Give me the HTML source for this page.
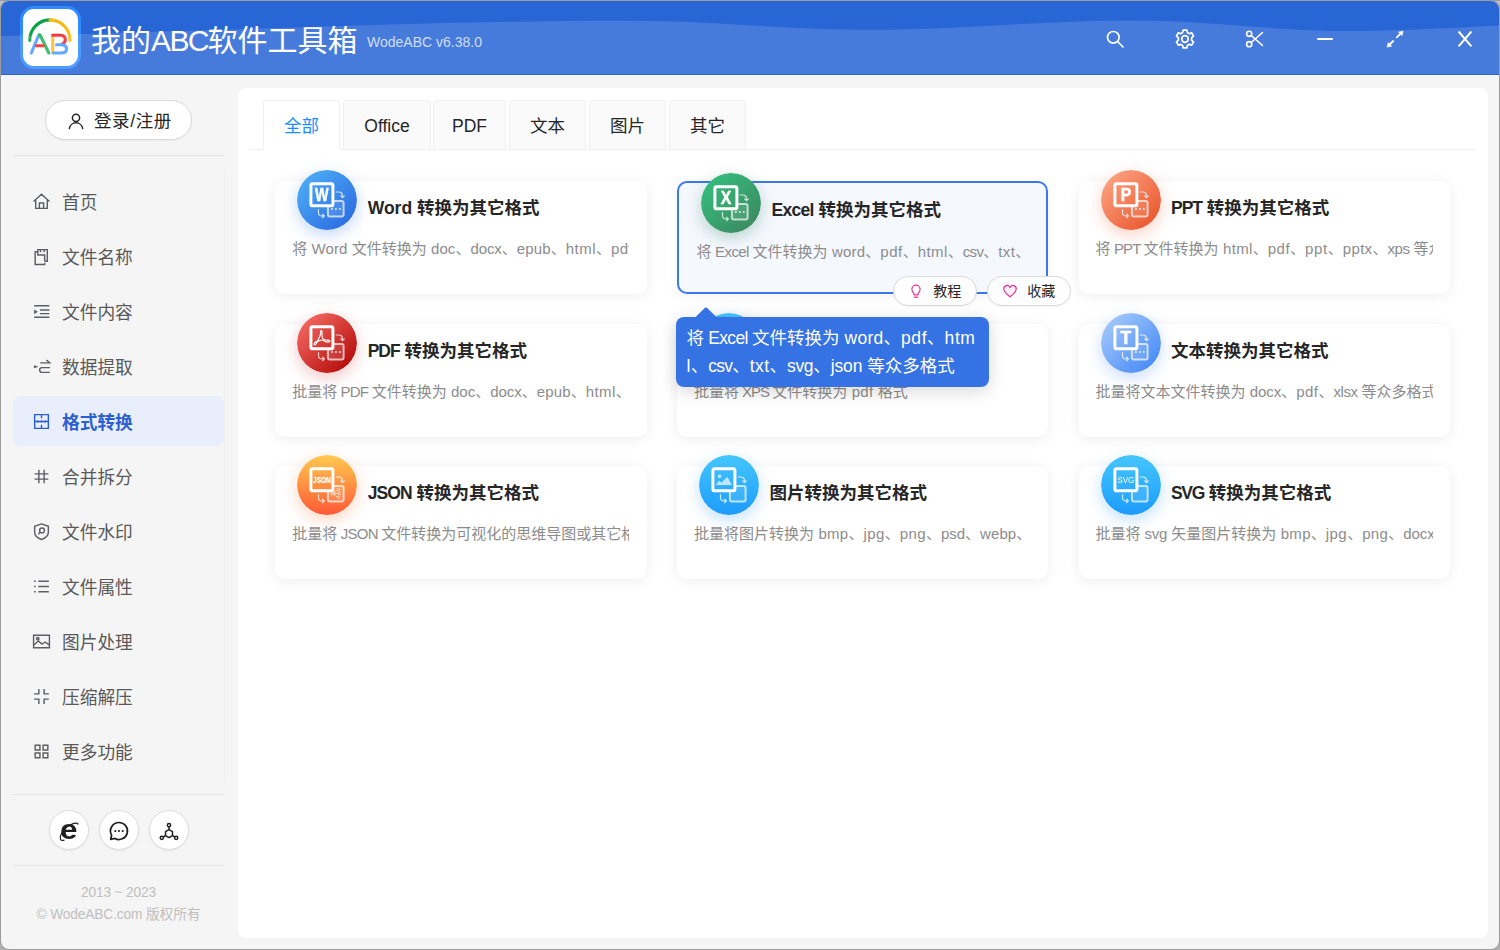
<!DOCTYPE html>
<html lang="zh-CN">
<head>
<meta charset="utf-8">
<title>我的ABC软件工具箱</title>
<style>
*{box-sizing:border-box;margin:0;padding:0}
html,body{width:1500px;height:950px;overflow:hidden}
body{background:linear-gradient(#8f9cc0 0,#8f9cc0 1px,#c2beb4 1px,#b0b0b0 100%);font-family:"Liberation Sans","Noto Sans CJK SC",sans-serif;color:#262626;position:relative}
.abs{position:absolute}
#win{position:absolute;left:1px;top:1px;width:1498px;height:948px;border-radius:8px;background:#f5f5f5;overflow:hidden;box-shadow:0 0 0 1px #9c9c9c}
/* header */
#hdr{position:absolute;left:0;top:0;width:1498px;height:74px;background:#2866d6}
#hdr svg.wave{position:absolute;left:0;top:0}
#logo{position:absolute;left:19px;top:5px;width:61px;height:62.500px;border-radius:14px;background:#fff;border:3px solid #2f8bff}
#title{position:absolute;left:90px;top:18.500px;font-size:30px;line-height:42px;color:#fff;white-space:nowrap;letter-spacing:0}
#title b{font-weight:400;letter-spacing:-1.600px;margin-right:-0.500px}
#ver{position:absolute;left:366px;top:31px;font-size:14px;line-height:20px;color:#c9d8f5;white-space:nowrap}
.hico{position:absolute;top:28px;width:20px;height:20px}
/* sidebar */
#login{position:absolute;left:44px;top:99px;width:147px;height:40px;border-radius:20px;background:#fff;border:1px solid #d9d9d9;box-shadow:0 1px 2px rgba(0,0,0,.04)}
#login span{position:absolute;left:48px;top:7px;letter-spacing:.600px;font-size:17.500px;line-height:26px;color:#262626;white-space:nowrap}
.hr{position:absolute;left:12px;width:211px;height:1px;background:#e4e4e4}
.mi{position:absolute;left:12px;width:211px;height:49px;border-radius:8px}
.mi span{position:absolute;left:49px;top:12.500px;font-size:17.700px;line-height:26px;color:#595959;white-space:nowrap}
.mi svg{position:absolute;left:19px;top:15px;width:19px;height:19px;stroke:#5c5f66;fill:none;stroke-width:1.350}
.mi.on{background:#e8eefc;margin-top:-1px;height:50px}
.mi.on span{margin-top:1px}
.mi.on svg{margin-top:1px}
.mi.on span{color:#2b5fd0;font-weight:700}
.mi.on svg{stroke:#2b5fd0}
.cb{position:absolute;top:809px;width:40px;height:40px;border-radius:20px;background:#fff;border:1px solid #dcdcdc;box-shadow:0 1px 2px rgba(0,0,0,.05)}
.foot{position:absolute;left:12px;width:211px;text-align:center;letter-spacing:-.150px;font-size:13.750px;line-height:20px;color:#bfbfbf;white-space:nowrap}
/* main */
#main{position:absolute;left:237px;top:87px;width:1250px;height:850px;border-radius:8px;background:#fff}
.tab{position:absolute;top:12px;height:50px;background:#fafafa;border:1px solid #f0f0f0;border-radius:4px 4px 0 0;font-size:17.500px;line-height:51.500px;text-align:center;color:#262626}
.tab.on{background:#fff;color:#1890ff;border-bottom-color:#fff}
.card{position:absolute;width:371.600px;height:113px;border-radius:10px;background:#fff;box-shadow:0 2px 14px rgba(0,0,0,.07)}
.card .ic{position:absolute;left:22.300px;top:-11.300px;width:60px;height:60px;border-radius:30px}
.card .t{position:absolute;left:92.500px;top:13px;font-size:17.500px;line-height:28px;font-weight:700;color:#262626;white-space:nowrap}
.card .d{position:absolute;left:17px;top:57px;width:337px;font-size:15px;line-height:22px;color:#8c8c8c;white-space:nowrap;overflow:hidden}

.card.sel{border:2px solid #3b78ee;background:#f5f8ff;box-shadow:0 2px 12px rgba(0,0,0,.05)}
.card.sel .ic{left:22.200px;top:-10.200px}
.card.sel .t{left:92.600px;top:13px}
.card.sel .d{left:17.500px;top:57.500px;width:329px}
.pill{position:absolute;width:83.700px;height:30px;border-radius:16px;background:#fff;border:1px solid #d9d9d9;box-shadow:0 1px 2px rgba(0,0,0,.04)}
.pill svg{position:absolute;top:6.300px;width:16px;height:16px}
.pill span{position:absolute;left:39px;top:3.700px;font-size:14px;line-height:21px;color:#262626;white-space:nowrap}
#tip{position:absolute;left:438px;top:229px;width:313px;height:70px;border-radius:8px;background:#3572e3;box-shadow:0 4px 18px rgba(0,0,0,.16)}
#tip>i{position:absolute;left:22px;top:-7px;width:15px;height:15px;background:#3572e3;transform:rotate(45deg);border-radius:2px}
#tip div{position:absolute;left:10.500px;top:7px;font-size:17.500px;line-height:28px;color:#fff;white-space:nowrap}
.card i,#tip div i{font-style:normal}
</style>
</head>
<body>
<div id="win">
  <div id="hdr">
    <div id="logo"><svg viewBox="23 9 55 56.500" width="55" height="56.500" style="position:absolute;left:0;top:0" fill="none" stroke-width="3.100" stroke-linecap="round" stroke-linejoin="round">
<path d="M29.800 40.400 A20.200 20.200 0 0 1 50 19.900" stroke="#0aa344"/>
<path d="M50 19.900 A20.200 20.200 0 0 1 70 40.400" stroke="#fbb80f"/>
<path d="M31.300 53 L38 36.800 Q39.300 34 40.600 36.800" stroke="#4c9bff"/>
<path d="M39.300 34.900 Q40.300 34.900 41.300 37.500 L48.800 53" stroke="#1fb35a"/>
<path d="M36.400 45.800 H43.200" stroke="#ff1f1f"/>
<path d="M52.700 35.300 V53" stroke="#fbbc1d"/>
<path d="M52.700 35.300 H60.500 Q65.300 35.300 65.300 39.800 Q65.300 43 62 44.300" stroke="#f5222d"/>
<path d="M56.500 44.800 H61.500 Q66.500 45 66.500 49 Q66.500 53 61.500 53 H53.500" stroke="#4c9bff"/>
</svg></div>
    <div id="title">我的<b>ABC</b>软件工具箱</div>
    <div id="ver">WodeABC v6.38.0</div>

    <svg class="hico" style="left:1104px" viewBox="0 0 20 20" fill="none" stroke="#fff" stroke-width="1.700" stroke-linecap="round"><circle cx="8.300" cy="8.300" r="5.800"/><path d="M12.700 12.700 L18 18"/></svg>
    <svg class="hico" style="left:1174px" viewBox="0.500 0.500 19 19" fill="none" stroke="#fff" stroke-width="1.650" stroke-linejoin="round"><circle cx="10" cy="10" r="3.100"/><path d="M8.300 1.500 H11.700 L12.300 3.900 L14 4.900 L16.400 4.200 L18.100 7.100 L16.300 8.900 V11.100 L18.100 12.900 L16.400 15.800 L14 15.100 L12.300 16.100 L11.700 18.500 H8.300 L7.700 16.100 L6 15.100 L3.600 15.800 L1.900 12.900 L3.700 11.100 V8.900 L1.900 7.100 L3.600 4.200 L6 4.900 L7.700 3.900 Z"/></svg>
    <svg class="hico" style="left:1244px" viewBox="0 0 20 20" fill="none" stroke="#fff" stroke-width="1.600" stroke-linecap="round"><circle cx="4.200" cy="4.800" r="2.600"/><circle cx="4.200" cy="15.200" r="2.600"/><path d="M6.200 6.500 L17.500 16.500 M6.200 13.500 L17.500 3.500"/></svg>
    <svg class="hico" style="left:1314px" viewBox="0 0 20 20" fill="none" stroke="#fff" stroke-width="2.200" stroke-linecap="round"><path d="M3 10 H17"/></svg>
    <svg class="hico" style="left:1384px" viewBox="0 0 20 20" fill="#fff" stroke="#fff" stroke-width="1.900" stroke-linecap="butt"><path d="M11.300 8.900 L16 4.200 M8.700 11.500 L4 16.200" fill="none"/><path d="M18.200 2 L13.400 3 L17.200 6.800 Z M2 18.200 L6.800 17.200 L3 13.400 Z" stroke-width=".4" stroke-linejoin="round"/></svg>
    <svg class="hico" style="left:1454px" viewBox="0 0 20 20" fill="none" stroke="#fff" stroke-width="2" stroke-linecap="butt"><path d="M3.600 2.500 L16.400 17.400 M16.400 2.500 L3.600 17.400"/></svg>
    <svg class="wave" width="1498" height="74" viewBox="0 0 1498 74"><path d="M0 35 C200 31 420 20 624 19.700 C720 19.700 780 28.800 871 28.800 C960 28.800 1040 19.500 1130 19.500 C1210 19.500 1270 30 1349 30 C1390 30 1440 27.500 1498 24.500 L1498 73 L0 73 Z" fill="#fff" fill-opacity="0.14"/></svg>
  </div>

  <div id="login"><svg viewBox="0 0 18 18" style="position:absolute;left:21px;top:11px;width:18px;height:18px" fill="none" stroke="#262626" stroke-width="1.500" stroke-linecap="round"><circle cx="9" cy="5.800" r="3.600"/><path d="M2.300 16.500 A6.800 6.800 0 0 1 15.700 16.500"/></svg><span>登录/注册</span></div>
  <div class="hr" style="top:154px"></div>

  <div class="mi" style="top:176px"><svg viewBox="0 0 18 18"><path d="M1.5 9 L9 2 L16.5 9 M3.5 7.5 V15.5 H14.5 V7.5 M7 15.5 V10.5 H11 V15.5"/></svg><span>首页</span></div>
  <div class="mi" style="top:231px"><svg viewBox="0 0 18 18"><path d="M5.5 4.5 H3 V16.5 H12 V15 M5.5 4.5 V2.5 H14.5 V13.5 H12 M5.5 4.5 V7.5 H12 V13.5 M8 2.5 V5 M11.5 2.5 V5"/></svg><span>文件名称</span></div>
  <div class="mi" style="top:286px"><svg viewBox="0 0 18 18"><path d="M2 3.5 H16.5 M7.5 7.5 H16.5 M7.5 11 H16.5 M2 14.5 H16.5" /><path d="M2 7 L5.5 9.2 L2 11.5 Z" fill="#5c5f66" stroke="none"/></svg><span>文件内容</span></div>
  <div class="mi" style="top:341px"><svg viewBox="0 0 18 18"><path d="M7.800 5.600 H16.900 L13.700 2.800 M16.900 10.100 H9.500 A2.250 2.250 0 0 0 9.500 14.600 H16.900"/><circle cx="2.900" cy="9.200" r="1.250" fill="#5c5f66" stroke="none"/><path d="M2.900 9.200 H5.500" stroke-width="1"/></svg><span>数据提取</span></div>
  <div class="mi on" style="top:396px"><svg viewBox="0 0 18 18"><path d="M2.500 2.500 H15.500 V15.500 H2.500 Z M9 2.500 V6 M9 7.800 V10.200 M9 12 V15.500 M2.500 9 H15.500"/><path d="M5.300 7.300 L7 9 L5.300 10.700 Z M12.700 7.300 L11 9 L12.700 10.700 Z" fill="#2b5fd0" stroke="none"/></svg><span>格式转换</span></div>
  <div class="mi" style="top:451px"><svg viewBox="0 0 18 18"><path d="M6.5 2.5 V15.5 M11.5 2.5 V15.5 M2.5 6.5 H15.5 M2.5 11.5 H15.5"/></svg><span>合并拆分</span></div>
  <div class="mi" style="top:506px"><svg viewBox="0 0 18 18"><path d="M9 1.8 L15.5 4 V10 C15.5 13 12.5 15.3 9 16.6 C5.500 15.3 2.5 13 2.5 10 V4 Z"/><circle cx="9.5" cy="8" r="2.3"/><path d="M7.8 9.8 L6 11.7"/></svg><span>文件水印</span></div>
  <div class="mi" style="top:561px"><svg viewBox="0 0 18 18"><path d="M6 4 H16 M6 9 H16 M6 14 H16 M2 4 H3.5 M2 9 H3.5 M2 14 H3.5"/></svg><span>文件属性</span></div>
  <div class="mi" style="top:616px"><svg viewBox="0 0 18 18"><path d="M1.5 3 H16.500 V15 H1.5 Z M1.5 12.5 L6 8.5 L9.5 11.5 L12.5 9.5 L16.5 12.5"/><circle cx="5.5" cy="6.3" r="1.1"/></svg><span>图片处理</span></div>
  <div class="mi" style="top:671px"><svg viewBox="0 0 18 18"><path d="M2 6.5 H6.5 V2 M11.5 2 V6.5 H16 M2 11.5 H6.5 V16 M11.5 16 V11.5 H16"/></svg><span>压缩解压</span></div>
  <div class="mi" style="top:726px"><svg viewBox="0 0 18 18"><path d="M3 3 H7.5 V7.5 H3 Z M10.500 3 H15 V7.5 H10.5 Z M3 10.5 H7.5 V15 H3 Z M10.500 10.500 H15 V15 H10.5 Z"/></svg><span>更多功能</span></div>

  <div class="abs" style="left:223px;top:170px;width:1px;height:609px;background:#f0f0f0"></div>
  <div class="hr" style="top:793px"></div>
  <div class="cb" style="left:48px"><span style="position:absolute;left:10.500px;top:3.500px;font:700 28px/30px 'Liberation Sans',sans-serif;color:#1f1f1f;transform:scaleX(1.12)">e</span><svg viewBox="0 0 38 38" style="position:absolute;left:0;top:0;width:38px;height:38px" fill="none" stroke="#1f1f1f" stroke-width="1.200"><path d="M28.300 13.300 C25.500 10 15 15 11 23.500 C9 28 10.500 30.500 14.500 29"/></svg></div>
  <div class="cb" style="left:98px"><svg viewBox="0 0 38 38" style="position:absolute;left:0;top:0.800px;width:38px;height:38px" fill="none" stroke="#1f1f1f" stroke-width="1.700" stroke-linejoin="round"><path d="M19 10.500 A8.500 8.500 0 1 1 14.800 26.400 L10.700 27.300 L11.600 23.200 A8.500 8.500 0 0 1 19 10.500 Z"/><g fill="#1f1f1f" stroke="none"><circle cx="15.300" cy="19" r="1.100"/><circle cx="19" cy="19" r="1.100"/><circle cx="22.700" cy="19" r="1.100"/></g></svg></div>
  <div class="cb" style="left:148px"><svg viewBox="0 0 38 38" style="position:absolute;left:0;top:1.500px;width:38px;height:38px" fill="none" stroke="#1f1f1f" stroke-width="1.500" stroke-linejoin="round"><path d="M19 16.600 L22.500 18.600 V22.600 L19 24.600 L15.500 22.600 V18.600 Z M19 16.600 V13.800 M15.500 22.600 L13.200 24 M22.500 22.600 L24.800 24"/><circle cx="19" cy="12.200" r="1.600"/><circle cx="11.800" cy="24.800" r="1.600"/><circle cx="26.200" cy="24.800" r="1.600"/></svg></div>
  <div class="hr" style="top:864px"></div>
  <div class="foot" style="top:882.200px">2013 ~ 2023</div>
  <div class="foot" style="top:904px">© WodeABC.com 版权所有</div>

  <div id="main">
    <div class="abs" style="left:12px;top:61px;width:1225px;height:1px;background:#f0f0f0"></div>
    <div class="card" style="left:37.2px;top:93px"><svg class="ic" style="filter:drop-shadow(0 5px 8px rgba(60,130,235,.32))" viewBox="0 0 60 60"><defs><linearGradient id="gw" gradientUnits="userSpaceOnUse" x1="8" y1="8" x2="52" y2="52"><stop offset="0" stop-color="#4ba9f4"/><stop offset="1" stop-color="#2e6fe3"/></linearGradient></defs><circle cx="30" cy="30" r="30" fill="url(#gw)"/><rect x="30.900" y="30.900" width="15.700" height="15.700" rx="2" fill="#fff" fill-opacity=".1" stroke="#fff" stroke-opacity=".68" stroke-width="2"/><g fill="#fff" fill-opacity=".75"><rect x="34" y="38.100" width="1.800" height="1.800"/><rect x="38" y="38.100" width="1.800" height="1.800"/><rect x="41.900" y="38.100" width="1.800" height="1.800"/></g><path d="M39.200 22 H42 A3.500 3.500 0 0 1 45.500 25.500 V27.400 M43.700 25.800 L45.500 27.700 L47.300 25.800" fill="none" stroke="#fff" stroke-opacity=".75" stroke-width="1.200" stroke-linecap="round" stroke-linejoin="round"/><path d="M21.500 39.700 V42.400 A3.500 3.500 0 0 0 25 45.900 H27.200 M25.600 44.100 L27.500 45.900 L25.600 47.700" fill="none" stroke="#fff" stroke-opacity=".75" stroke-width="1.200" stroke-linecap="round" stroke-linejoin="round"/><rect x="13.900" y="13.800" width="22" height="22" rx="1.600" fill="url(#gw)" stroke="#fff" stroke-width="3"/><text x="24.900" y="31.2" text-anchor="middle" font-family="Liberation Sans, sans-serif" font-weight="700" font-size="17.5" fill="#fff" stroke="#fff" stroke-width=".5" fill-opacity="1" letter-spacing="0" transform="translate(24.900 0) scale(0.82 1) translate(-24.900 0)">W</text></svg><div class="t">Word 转换为其它格式</div><div class="d">将<i style="letter-spacing:0.10px"> Word </i>文件转换为<i style="letter-spacing:0.07px"> doc</i>、<i style="letter-spacing:-0.07px">docx</i>、<i style="letter-spacing:0.15px">epub</i>、<i style="letter-spacing:0.44px">html</i>、<i style="letter-spacing:0.36px">pdf </i>等众多格式</div></div>
    <div class="card sel" style="left:438.9px;top:93px"><svg class="ic" style="filter:drop-shadow(0 5px 8px rgba(50,130,90,.32))" viewBox="0 0 60 60"><defs><linearGradient id="ge" gradientUnits="userSpaceOnUse" x1="8" y1="8" x2="52" y2="52"><stop offset="0" stop-color="#36bb7d"/><stop offset="1" stop-color="#3b8c61"/></linearGradient></defs><circle cx="30" cy="30" r="30" fill="url(#ge)"/><rect x="30.900" y="30.900" width="15.700" height="15.700" rx="2" fill="#fff" fill-opacity=".1" stroke="#fff" stroke-opacity=".68" stroke-width="2"/><g fill="#fff" fill-opacity=".75"><rect x="34" y="38.100" width="1.800" height="1.800"/><rect x="38" y="38.100" width="1.800" height="1.800"/><rect x="41.900" y="38.100" width="1.800" height="1.800"/></g><path d="M39.200 22 H42 A3.500 3.500 0 0 1 45.500 25.500 V27.400 M43.700 25.800 L45.500 27.700 L47.300 25.800" fill="none" stroke="#fff" stroke-opacity=".75" stroke-width="1.200" stroke-linecap="round" stroke-linejoin="round"/><path d="M21.500 39.700 V42.400 A3.500 3.500 0 0 0 25 45.900 H27.200 M25.600 44.100 L27.500 45.900 L25.600 47.700" fill="none" stroke="#fff" stroke-opacity=".75" stroke-width="1.200" stroke-linecap="round" stroke-linejoin="round"/><rect x="13.900" y="13.800" width="22" height="22" rx="1.600" fill="url(#ge)" stroke="#fff" stroke-width="3"/><text x="24.900" y="31.2" text-anchor="middle" font-family="Liberation Sans, sans-serif" font-weight="700" font-size="17.5" fill="#fff" stroke="#fff" stroke-width=".5" fill-opacity="1" letter-spacing="0" transform="translate(24.900 0) scale(0.9 1) translate(-24.900 0)">X</text></svg><div class="t"><i style="letter-spacing:-0.7px">Excel</i> 转换为其它格式</div><div class="d">将<i style="letter-spacing:-0.56px"> Excel </i>文件转换为<i style="letter-spacing:0.22px"> word</i>、<i style="letter-spacing:0.49px">pdf</i>、<i style="letter-spacing:0.44px">html</i>、<i style="letter-spacing:-0.68px">csv</i>、<i style="letter-spacing:0.41px">txt</i>、<i style="letter-spacing:-0.33px">svg</i>、<i style="letter-spacing:-0.06px">json </i>等众多格式</div></div>
    <div class="card" style="left:840.6px;top:93px"><svg class="ic" style="filter:drop-shadow(0 5px 8px rgba(240,110,70,.32))" viewBox="0 0 60 60"><defs><linearGradient id="gp" gradientUnits="userSpaceOnUse" x1="8" y1="8" x2="52" y2="52"><stop offset="0" stop-color="#fc9f7e"/><stop offset="1" stop-color="#ea5a30"/></linearGradient></defs><circle cx="30" cy="30" r="30" fill="url(#gp)"/><rect x="30.900" y="30.900" width="15.700" height="15.700" rx="2" fill="#fff" fill-opacity=".1" stroke="#fff" stroke-opacity=".68" stroke-width="2"/><g fill="#fff" fill-opacity=".75"><rect x="34" y="38.100" width="1.800" height="1.800"/><rect x="38" y="38.100" width="1.800" height="1.800"/><rect x="41.900" y="38.100" width="1.800" height="1.800"/></g><path d="M39.200 22 H42 A3.500 3.500 0 0 1 45.500 25.500 V27.400 M43.700 25.800 L45.500 27.700 L47.300 25.800" fill="none" stroke="#fff" stroke-opacity=".75" stroke-width="1.200" stroke-linecap="round" stroke-linejoin="round"/><path d="M21.500 39.700 V42.400 A3.500 3.500 0 0 0 25 45.900 H27.200 M25.600 44.100 L27.500 45.900 L25.600 47.700" fill="none" stroke="#fff" stroke-opacity=".75" stroke-width="1.200" stroke-linecap="round" stroke-linejoin="round"/><rect x="13.900" y="13.800" width="22" height="22" rx="1.600" fill="url(#gp)" stroke="#fff" stroke-width="3"/><text x="24.900" y="31.2" text-anchor="middle" font-family="Liberation Sans, sans-serif" font-weight="700" font-size="17.5" fill="#fff" stroke="#fff" stroke-width=".5" fill-opacity="1" letter-spacing="0" transform="translate(24.900 0) scale(0.9 1) translate(-24.900 0)">P</text></svg><div class="t"><i style="letter-spacing:-1.1px">PPT</i> 转换为其它格式</div><div class="d">将<i style="letter-spacing:-0.87px"> PPT </i>文件转换为<i style="letter-spacing:0.34px"> html</i>、<i style="letter-spacing:0.49px">pdf</i>、<i style="letter-spacing:0.62px">ppt</i>、<i style="letter-spacing:0.31px">pptx</i>、<i style="letter-spacing:-0.34px">xps </i>等众多格式</div></div>
    <div class="card" style="left:37.2px;top:236px"><svg class="ic" style="filter:drop-shadow(0 5px 8px rgba(210,50,50,.28))" viewBox="0 0 60 60"><defs><linearGradient id="gd" gradientUnits="userSpaceOnUse" x1="8" y1="8" x2="52" y2="52"><stop offset="0" stop-color="#f2655f"/><stop offset="1" stop-color="#b60f0d"/></linearGradient></defs><circle cx="30" cy="30" r="30" fill="url(#gd)"/><rect x="30.900" y="30.900" width="15.700" height="15.700" rx="2" fill="#fff" fill-opacity=".1" stroke="#fff" stroke-opacity=".68" stroke-width="2"/><g fill="#fff" fill-opacity=".75"><rect x="34" y="38.100" width="1.800" height="1.800"/><rect x="38" y="38.100" width="1.800" height="1.800"/><rect x="41.900" y="38.100" width="1.800" height="1.800"/></g><path d="M39.200 22 H42 A3.500 3.500 0 0 1 45.500 25.500 V27.400 M43.700 25.800 L45.500 27.700 L47.300 25.800" fill="none" stroke="#fff" stroke-opacity=".75" stroke-width="1.200" stroke-linecap="round" stroke-linejoin="round"/><path d="M21.500 39.700 V42.400 A3.500 3.500 0 0 0 25 45.900 H27.200 M25.600 44.100 L27.500 45.900 L25.600 47.700" fill="none" stroke="#fff" stroke-opacity=".75" stroke-width="1.200" stroke-linecap="round" stroke-linejoin="round"/><rect x="13.900" y="13.800" width="22" height="22" rx="1.600" fill="url(#gd)" stroke="#fff" stroke-width="3"/><path d="M17.600 31.800 C16.500 31.200 17.500 29.300 20.500 28 C22.500 24.500 23.800 21 23.600 18.700 C23.500 17.200 24.900 17.200 25 18.800 C25.100 21 24.500 23 25.500 25 C26.500 26.500 28 27.300 30 27.200 C33 27 33.600 28.600 32 29 C30 29.400 27.500 28.300 25.800 27 C23.500 27.300 21.800 27.800 20.500 28.500 C19.500 30.300 18.300 32 17.600 31.800 Z" fill="none" stroke="#fff" stroke-width="1.150" stroke-linejoin="round"/></svg><div class="t"><i style="letter-spacing:-1.0px">PDF</i> 转换为其它格式</div><div class="d">批量将<i style="letter-spacing:-0.78px"> PDF </i>文件转换为<i style="letter-spacing:0.07px"> doc</i>、<i style="letter-spacing:-0.07px">docx</i>、<i style="letter-spacing:0.15px">epub</i>、<i style="letter-spacing:0.44px">html</i>、<i style="letter-spacing:0.29px">txt </i>等众多格式</div></div>
    <div class="card" style="left:438.9px;top:236px"><svg class="ic" style="filter:drop-shadow(0 5px 8px rgba(60,160,250,.3))" viewBox="0 0 60 60"><defs><linearGradient id="gx" gradientUnits="userSpaceOnUse" x1="0" y1="0" x2="0" y2="60"><stop offset="0" stop-color="#45c6ff"/><stop offset="1" stop-color="#2a9bf5"/></linearGradient></defs><circle cx="30" cy="30" r="30" fill="url(#gx)"/><rect x="30.900" y="30.900" width="15.700" height="15.700" rx="2" fill="#fff" fill-opacity=".1" stroke="#fff" stroke-opacity=".68" stroke-width="2"/><path d="M39.200 22 H42 A3.500 3.500 0 0 1 45.500 25.500 V27.400 M43.700 25.800 L45.500 27.700 L47.300 25.800" fill="none" stroke="#fff" stroke-opacity=".75" stroke-width="1.200" stroke-linecap="round" stroke-linejoin="round"/><path d="M21.500 39.700 V42.400 A3.500 3.500 0 0 0 25 45.900 H27.200 M25.600 44.100 L27.500 45.900 L25.600 47.700" fill="none" stroke="#fff" stroke-opacity=".75" stroke-width="1.200" stroke-linecap="round" stroke-linejoin="round"/><rect x="13.900" y="13.800" width="22" height="22" rx="1.600" fill="url(#gx)" stroke="#fff" stroke-width="3"/><text x="24.900" y="28.2" text-anchor="middle" font-family="Liberation Sans, sans-serif" font-weight="400" font-size="9.3" fill="#fff" fill-opacity="1" letter-spacing="0" transform="translate(24.900 0) scale(0.86 1) translate(-24.900 0)">XPS</text></svg><div class="t"><i style="letter-spacing:-1.0px">XPS</i> 转换为 PDF 格式</div><div class="d">批量将<i style="letter-spacing:-1.01px"> XPS </i>文件转换为<i style="letter-spacing:0.27px"> pdf </i>格式</div></div>
    <div class="card" style="left:840.6px;top:236px"><svg class="ic" style="filter:drop-shadow(0 5px 8px rgba(90,150,250,.32))" viewBox="0 0 60 60"><defs><linearGradient id="gt" gradientUnits="userSpaceOnUse" x1="8" y1="8" x2="52" y2="52"><stop offset="0" stop-color="#a0c6fb"/><stop offset="1" stop-color="#4b8df7"/></linearGradient></defs><circle cx="30" cy="30" r="30" fill="url(#gt)"/><rect x="30.900" y="30.900" width="15.700" height="15.700" rx="2" fill="#fff" fill-opacity=".1" stroke="#fff" stroke-opacity=".68" stroke-width="2"/><g fill="#fff" fill-opacity=".75"><rect x="34" y="38.100" width="1.800" height="1.800"/><rect x="38" y="38.100" width="1.800" height="1.800"/><rect x="41.900" y="38.100" width="1.800" height="1.800"/></g><path d="M39.200 22 H42 A3.500 3.500 0 0 1 45.500 25.500 V27.400 M43.700 25.800 L45.500 27.700 L47.300 25.800" fill="none" stroke="#fff" stroke-opacity=".75" stroke-width="1.200" stroke-linecap="round" stroke-linejoin="round"/><path d="M21.500 39.700 V42.400 A3.500 3.500 0 0 0 25 45.900 H27.200 M25.600 44.100 L27.500 45.900 L25.600 47.700" fill="none" stroke="#fff" stroke-opacity=".75" stroke-width="1.200" stroke-linecap="round" stroke-linejoin="round"/><rect x="13.900" y="13.800" width="22" height="22" rx="1.600" fill="url(#gt)" stroke="#fff" stroke-width="3"/><text x="24.900" y="31.2" text-anchor="middle" font-family="Liberation Sans, sans-serif" font-weight="700" font-size="17.5" fill="#fff" stroke="#fff" stroke-width=".5" fill-opacity="1" letter-spacing="0" transform="translate(24.900 0) scale(1 1) translate(-24.900 0)">T</text></svg><div class="t">文本转换为其它格式</div><div class="d">批量将文本文件转换为<i style="letter-spacing:-0.06px"> docx</i>、<i style="letter-spacing:0.49px">pdf</i>、<i style="letter-spacing:-0.43px">xlsx </i>等众多格式</div></div>
    <div class="card" style="left:37.2px;top:378px"><svg class="ic" style="filter:drop-shadow(0 5px 8px rgba(255,120,60,.32))" viewBox="0 0 60 60"><defs><linearGradient id="gj" gradientUnits="userSpaceOnUse" x1="0" y1="0" x2="0" y2="60"><stop offset="0" stop-color="#ffca4f"/><stop offset="1" stop-color="#ff5836"/></linearGradient></defs><circle cx="30" cy="30" r="30" fill="url(#gj)"/><rect x="30.900" y="30.900" width="15.700" height="15.700" rx="2" fill="#fff" fill-opacity=".1" stroke="#fff" stroke-opacity=".68" stroke-width="2"/><path d="M39.200 22 H42 A3.500 3.500 0 0 1 45.500 25.500 V27.400 M43.700 25.800 L45.500 27.700 L47.300 25.800" fill="none" stroke="#fff" stroke-opacity=".75" stroke-width="1.200" stroke-linecap="round" stroke-linejoin="round"/><path d="M21.500 39.700 V42.400 A3.500 3.500 0 0 0 25 45.900 H27.200 M25.600 44.100 L27.500 45.900 L25.600 47.700" fill="none" stroke="#fff" stroke-opacity=".75" stroke-width="1.200" stroke-linecap="round" stroke-linejoin="round"/><rect x="13.900" y="13.800" width="22" height="22" rx="1.600" fill="url(#gj)" stroke="#fff" stroke-width="3"/><text x="24.900" y="28.3" text-anchor="middle" font-family="Liberation Sans, sans-serif" font-weight="700" font-size="9.3" fill="#fff" stroke="#fff" stroke-width=".25" fill-opacity="1" letter-spacing="0" transform="translate(24.900 0) scale(0.7 1) translate(-24.900 0)">JSON</text><g fill="none" stroke="#fff" stroke-opacity=".8" stroke-width=".9"><circle cx="35.300" cy="38.500" r="1.400"/><circle cx="41.500" cy="34.500" r="1.300"/><circle cx="42.300" cy="38.500" r="1.300"/><circle cx="41.500" cy="42.500" r="1.300"/><path d="M36.500 37.800 L40.300 35.200 M36.700 38.500 H41 M36.500 39.200 L40.300 41.800"/></g></svg><div class="t"><i style="letter-spacing:-0.9px">JSON</i> 转换为其它格式</div><div class="d">批量将<i style="letter-spacing:-0.71px"> JSON </i>文件转换为可视化的思维导图或其它格式</div></div>
    <div class="card" style="left:438.9px;top:378px"><svg class="ic" style="filter:drop-shadow(0 5px 8px rgba(60,160,250,.32))" viewBox="0 0 60 60"><defs><linearGradient id="gi" gradientUnits="userSpaceOnUse" x1="0" y1="0" x2="0" y2="60"><stop offset="0" stop-color="#45c6ff"/><stop offset="1" stop-color="#1c9bfc"/></linearGradient></defs><circle cx="30" cy="30" r="30" fill="url(#gi)"/><rect x="30.900" y="30.900" width="15.700" height="15.700" rx="2" fill="#fff" fill-opacity=".1" stroke="#fff" stroke-opacity=".68" stroke-width="2"/><path d="M39.200 22 H42 A3.500 3.500 0 0 1 45.500 25.500 V27.400 M43.700 25.800 L45.500 27.700 L47.300 25.800" fill="none" stroke="#fff" stroke-opacity=".75" stroke-width="1.200" stroke-linecap="round" stroke-linejoin="round"/><path d="M21.500 39.700 V42.400 A3.500 3.500 0 0 0 25 45.900 H27.200 M25.600 44.100 L27.500 45.900 L25.600 47.700" fill="none" stroke="#fff" stroke-opacity=".75" stroke-width="1.200" stroke-linecap="round" stroke-linejoin="round"/><rect x="13.900" y="13.800" width="22" height="22" rx="1.600" fill="url(#gi)" stroke="#fff" stroke-width="3"/><path d="M17.300 29.700 L20.200 26 L22.500 28 L28.200 22.300 L32.400 29.700 Z" fill="#fff" fill-opacity=".68" stroke="#fff" stroke-opacity=".68" stroke-width=".6" stroke-linejoin="round"/><circle cx="20.600" cy="21.400" r="1.800" fill="#fff" fill-opacity=".68"/></svg><div class="t">图片转换为其它格式</div><div class="d">批量将图片转换为<i style="letter-spacing:0.32px"> bmp</i>、<i style="letter-spacing:0.42px">jpg</i>、<i style="letter-spacing:0.36px">png</i>、<i style="letter-spacing:-0.06px">psd</i>、<i style="letter-spacing:0.11px">webp</i>、<i style="letter-spacing:0.03px">ico </i>等众多格式</div></div>
    <div class="card" style="left:840.6px;top:378px"><svg class="ic" style="filter:drop-shadow(0 5px 8px rgba(60,160,250,.32))" viewBox="0 0 60 60"><defs><linearGradient id="gs" gradientUnits="userSpaceOnUse" x1="0" y1="0" x2="0" y2="60"><stop offset="0" stop-color="#45c6ff"/><stop offset="1" stop-color="#1c9bfc"/></linearGradient></defs><circle cx="30" cy="30" r="30" fill="url(#gs)"/><rect x="30.900" y="30.900" width="15.700" height="15.700" rx="2" fill="#fff" fill-opacity=".1" stroke="#fff" stroke-opacity=".68" stroke-width="2"/><path d="M39.200 22 H42 A3.500 3.500 0 0 1 45.500 25.500 V27.400 M43.700 25.800 L45.500 27.700 L47.300 25.800" fill="none" stroke="#fff" stroke-opacity=".75" stroke-width="1.200" stroke-linecap="round" stroke-linejoin="round"/><path d="M21.500 39.700 V42.400 A3.500 3.500 0 0 0 25 45.900 H27.200 M25.600 44.100 L27.500 45.900 L25.600 47.700" fill="none" stroke="#fff" stroke-opacity=".75" stroke-width="1.200" stroke-linecap="round" stroke-linejoin="round"/><rect x="13.900" y="13.800" width="22" height="22" rx="1.600" fill="url(#gs)" stroke="#fff" stroke-width="3"/><text x="24.900" y="28.3" text-anchor="middle" font-family="Liberation Sans, sans-serif" font-weight="400" font-size="9.3" fill="#fff" fill-opacity="1" letter-spacing="0" transform="translate(24.900 0) scale(0.86 1) translate(-24.900 0)">SVG</text></svg><div class="t"><i style="letter-spacing:-1.4px">SVG</i> 转换为其它格式</div><div class="d">批量将<i style="letter-spacing:-0.22px"> svg </i>矢量图片转换为<i style="letter-spacing:0.32px"> bmp</i>、<i style="letter-spacing:0.42px">jpg</i>、<i style="letter-spacing:0.36px">png</i>、<i style="letter-spacing:-0.06px">docx </i>等众多格式</div></div>
    <div class="pill" style="left:655.300px;top:188px"><svg viewBox="0 0 16 16" style="left:14px"><path d="M5.900 10.400 C4.500 9.200 3.900 7.800 3.900 6.300 A4.100 4.100 0 0 1 12.100 6.300 C12.100 7.800 11.500 9.200 10.100 10.400 V11.800 H5.900 Z M6.200 14.200 H9.800" fill="none" stroke="#eb2f96" stroke-width="1.2" stroke-linejoin="round" stroke-linecap="round"/></svg><span>教程</span></div>
    <div class="pill" style="left:749.300px;top:188px"><svg viewBox="0 0 16 16" style="left:14px"><path d="M8 13.800 C5 11.500 1.800 9 1.800 6 A3.200 3.200 0 0 1 8 4.600 A3.200 3.200 0 0 1 14.200 6 C14.200 9 11 11.500 8 13.800 Z" fill="#fff0f6" stroke="#eb2f96" stroke-width="1.2" stroke-linejoin="round"/></svg><span>收藏</span></div>
    <div id="tip"><svg width="24" height="11" viewBox="0 0 24 11" style="position:absolute;left:18px;top:-10.300px"><path d="M0.700 11 L11 0.800 Q12 0 13 0.800 L23.300 11 Z" fill="#3572e3"/></svg><div>将<i style="letter-spacing:-0.65px"> Excel </i>文件转换为<i style="letter-spacing:0.25px"> word</i>、<i style="letter-spacing:0.58px">pdf</i>、<i style="letter-spacing:0.56px">htm</i><br><i style="letter-spacing:0.35px">l</i>、<i style="letter-spacing:-0.79px">csv</i>、<i style="letter-spacing:0.47px">txt</i>、<i style="letter-spacing:-0.38px">svg</i>、<i style="letter-spacing:-0.08px">json </i>等众多格式</div></div>
    <div class="tab on" style="left:25px;width:77px">全部</div>
    <div class="tab" style="left:105px;width:88px">Office</div>
    <div class="tab" style="left:195px;width:73px">PDF</div>
    <div class="tab" style="left:271px;width:77px">文本</div>
    <div class="tab" style="left:351px;width:77px">图片</div>
    <div class="tab" style="left:431px;width:77px">其它</div>
  </div>
</div>
</body>
</html>
